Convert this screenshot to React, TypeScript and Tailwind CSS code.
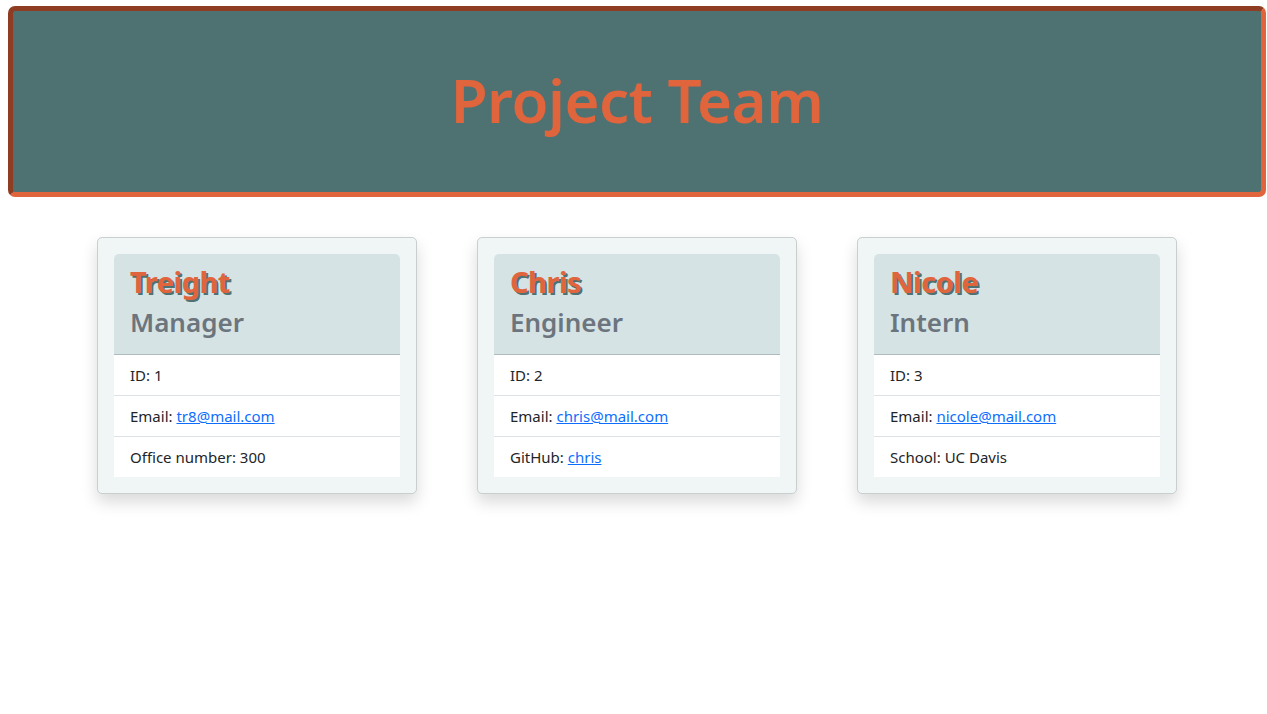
import React from 'react';

type Member = {
  name: string;
  role: string;
  id: number;
  email: string;
  extraLabel: string;
  extraValue: string;
  extraLink?: boolean;
};

const team: Member[] = [
  { name: 'Treight', role: 'Manager', id: 1, email: 'tr8@mail.com', extraLabel: 'Office number', extraValue: '300' },
  { name: 'Chris', role: 'Engineer', id: 2, email: 'chris@mail.com', extraLabel: 'GitHub', extraValue: 'chris', extraLink: true },
  { name: 'Nicole', role: 'Intern', id: 3, email: 'nicole@mail.com', extraLabel: 'School', extraValue: 'UC Davis' },
];

const MemberCard: React.FC<{ member: Member }> = ({ member }) => {
  return (
    <div className="w-[320px] bg-[#f0f5f5] border border-[#c9cecf] rounded-[5px] p-4 shadow-[0_8px_16px_rgba(0,0,0,0.15)]">
      {/* Card header */}
      <div className="bg-[#d6e3e4] rounded-t-[5px] border-b border-[#aebcbd] px-4 pt-[10px] pb-[14px]">
        <h2 className="text-[29px] leading-[36px] font-bold text-[#e0643c] [text-shadow:2px_2px_0_#4e7172] tracking-[-0.5px]">
          {member.name}
        </h2>
        <h3 className="mt-[4px] text-[26px] leading-[36px] font-semibold text-[#6c757d]">{member.role}</h3>
      </div>

      {/* Details */}
      <ul className="bg-white text-[15px] text-[#212529]">
        <li className="px-4 h-10 flex items-center">ID: {member.id}</li>
        <li className="px-4 h-[41px] flex items-center border-t border-[#dee2e6]">
          Email:&nbsp;
          <a href={`mailto:${member.email}`} className="text-[#0d6efd] underline">
            {member.email}
          </a>
        </li>
        <li className="px-4 h-[41px] flex items-center border-t border-[#dee2e6]">
          {member.extraLabel}:&nbsp;
          {member.extraLink ? (
            <a href="#" className="text-[#0d6efd] underline">
              {member.extraValue}
            </a>
          ) : (
            member.extraValue
          )}
        </li>
      </ul>
    </div>
  );
};

export default function App() {
  return (
    <div className="min-h-screen bg-white pt-[6px] font-['Noto_Sans',sans-serif]">
      <header className="ml-[8px] mr-[1px] h-[191px] flex items-center justify-center bg-[#4e7172] rounded-[7px] border-[5px] border-t-[#8e3c22] border-l-[#8e3c22] border-b-[#e0643c] border-r-[#e0643c]">
        <h1 className="text-[60px] font-semibold text-[#e0643c] pb-[4px] tracking-[-0.5px]">Project Team</h1>
      </header>

      <main className="mt-[40px] flex justify-start gap-[60px] pl-[97px]">
        {team.map((m) => (
          <MemberCard key={m.id} member={m} />
        ))}
      </main>
    </div>
  );
}
